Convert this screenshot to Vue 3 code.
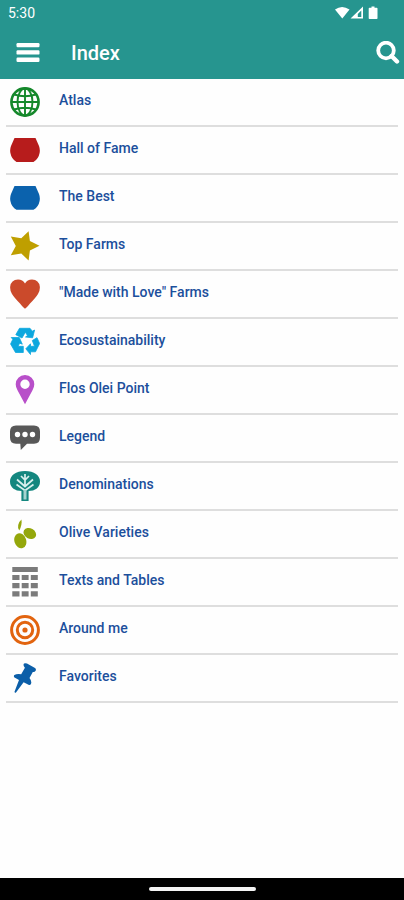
<script setup>
const items = [
  { id: 'atlas', label: 'Atlas' },
  { id: 'fame', label: 'Hall of Fame' },
  { id: 'best', label: 'The Best' },
  { id: 'farms', label: 'Top Farms' },
  { id: 'love', label: '"Made with Love" Farms' },
  { id: 'eco', label: 'Ecosustainability' },
  { id: 'point', label: 'Flos Olei Point' },
  { id: 'legend', label: 'Legend' },
  { id: 'denominations', label: 'Denominations' },
  { id: 'olive', label: 'Olive Varieties' },
  { id: 'tables', label: 'Texts and Tables' },
  { id: 'around', label: 'Around me' },
  { id: 'favorites', label: 'Favorites' },
]
</script>

<template>
  <div class="screen">
    <header class="header">
      <div class="status">
        <span>5:30</span>
        <svg class="status-icons" width="44" height="14" viewBox="0 0 44 14" fill="#fff" aria-hidden="true">
          <path d="M0 3.500Q7 -1.500 14.500 3.500L7.300 12.500Z" />
          <path fill-rule="evenodd" d="M28 .5V12.500H15.500ZM26.300 4.500L22.800 8V11H26.300Z" />
          <path d="M36.500 .5h3v1.200h2.200q.8 0 .8.800v9.700q0 .8-.8.800h-7.200q-.8 0-.8-.8V2.500q0-.8.8-.8h2z" />
        </svg>
      </div>
      <div class="bar">
        <button class="icon-button" type="button" aria-label="Menu">
          <svg width="24" height="20" viewBox="0 0 24 20" fill="#fff" aria-hidden="true">
            <rect x="0.500" y="0" width="23" height="4.300" rx="1.200" />
            <rect x="0.500" y="7.300" width="23" height="4.300" rx="1.200" />
            <rect x="0.500" y="14.600" width="23" height="4.300" rx="1.200" />
          </svg>
        </button>
        <h1 class="title">Index</h1>
        <button class="icon-button" type="button" aria-label="Search">
          <svg width="24" height="24" viewBox="0 0 24 24" fill="none" stroke="#fff" aria-hidden="true">
            <circle cx="10" cy="9.500" r="7.800" stroke-width="3.800" />
            <path d="M15.500 15L21 20.500" stroke-width="4.400" stroke-linecap="round" />
          </svg>
        </button>
      </div>
    </header>

    <nav class="list" aria-label="Index">
      <a v-for="item in items" :key="item.id" class="row" :href="'#' + item.id">
        <svg class="icon" viewBox="0 0 30 30" aria-hidden="true">
          <g v-if="item.id === 'atlas'" fill="none" stroke="#15882b" stroke-width="1.900">
            <circle cx="15" cy="15" r="13.600" stroke-width="2.600" />
            <ellipse cx="15" cy="15" rx="7.500" ry="13.500" />
            <path d="M15 1V29M1 15H29M4 7.500Q15 11 26 7.500M4 22.500Q15 19 26 22.500" />
          </g>
          <path v-else-if="item.id === 'fame'" fill="#b71c1c" d="M4.500 3H25.500L29 11Q30.300 14.500 29.600 18Q28.500 24 23.500 27H6.500Q1.500 24 .4 18Q-.3 14.500 1 11Z" />
          <path v-else-if="item.id === 'best'" fill="#0b62ad" d="M4.500 3H25.500L29 11Q30.300 14.500 29.600 18Q28.500 24 23.500 26.700H6.500Q1.500 24 .4 18Q-.3 14.500 1 11Z" />
          <path v-else-if="item.id === 'farms'" fill="#bf9f00" d="M18.600.3L19.900 10L29.500 14.800L19.900 19.600L18.600 29.500L11.300 22.500L.8 24.300L5.800 15L.8 5.500L11.300 7.300Z" />
          <path v-else-if="item.id === 'love'" fill="#cb4a2b" d="M15 29.700Q13.500 28.800 10 24.500Q4.500 19 2 15Q-.2 11.500.2 7.500Q1 .7 8 .4Q12.800.4 15 4.500Q17.200.4 22 .4Q29 .7 29.800 7.500Q30.200 11.500 28 15Q25.500 19 20 24.500Q16.500 28.800 15 29.700Z" />
          <g v-else-if="item.id === 'eco'" fill="#0ca7de" stroke="#0ca7de" stroke-width="0.800" stroke-linejoin="round">
            <path d="M5.800 7.700L9.500 1.300H20L22.300 4.200L24.600 3L22.600 10.800L15.500 10L17.500 8.500L15.300 5.200L12 11Z" />
            <path d="M22.300 13.500L27 10.700L29.600 16.500L25.500 24.800H20.500V27.500L15.800 21.800L20.500 16.800V19.300H24.500Z" />
            <path d="M1.200 10.500L9.300 10.500L12.300 17.200L9.700 16.200L8 19.300H13.300V25.500H5.500L.6 17L2.800 12.300Z" />
          </g>
          <path v-else-if="item.id === 'point'" fill="#b84fc9" fill-rule="evenodd" d="M15 0Q19 0 21.600 2.700Q24.300 5.300 24.300 9.300Q24.300 12 22.500 15.300L15 29.300L7.500 15.300Q5.700 12 5.700 9.300Q5.700 5.300 8.400 2.700Q11 0 15 0ZM15 4.500A4.700 4.700 0 1 0 15 13.900A4.700 4.700 0 1 0 15 4.500Z" />
          <g v-else-if="item.id === 'legend'">
            <path fill="#585858" d="M6 2.500H24Q30 2.500 30 8.500V14.500Q30 20.700 24 20.700H17L10.800 27L10.300 20.700H6Q0 20.700 0 14.500V8.500Q0 2.500 6 2.500Z" />
            <g fill="#fff">
              <circle cx="7.500" cy="11.500" r="2.700" />
              <circle cx="15" cy="11.500" r="2.700" />
              <circle cx="22.500" cy="11.500" r="2.700" />
            </g>
          </g>
          <g v-else-if="item.id === 'denominations'">
            <path fill="#14877f" d="M15 0Q22 0 26 3Q30 6 30 10.500Q30 15 26.500 17.700Q23.500 20 18.600 20V30H11.400V20Q6.500 20 3.500 17.700Q0 15 0 10.500Q0 6 4 3Q8 0 15 0Z" />
            <path fill="none" stroke="#d9f0ee" stroke-width="1.700" d="M15 3V15M11 5L15 9L19 5M7 8.500L15 15.500L23 8.500M6.500 13.500L15 19.500L23.500 13.500" />
            <path fill="#a5d3cf" d="M13.500 19H16.500V28.500H13.500Z" />
          </g>
          <g v-else-if="item.id === 'olive'" fill="#94a70b">
            <ellipse cx="10.300" cy="21.800" rx="5.900" ry="7.700" transform="rotate(-18 10.300 21.800)" />
            <ellipse cx="19.800" cy="14.500" rx="6.700" ry="5.200" transform="rotate(30 19.800 14.500)" />
            <path d="M11.500.5Q12.300 5.500 9.300 11.500Q7.500 9.500 8.200 6Q9 2.500 11.500.5Z" />
          </g>
          <path v-else-if="item.id === 'tables'" fill="#7b7b7b" d="M2.300 0H27.800V5H2.300ZM2.300 8H9.500V13H2.300ZM11.700 8H18.600V13H11.700ZM20.800 8H27.800V13H20.800ZM2.300 16H9.500V21.200H2.300ZM11.700 16H18.600V21.200H11.700ZM20.800 16H27.800V21.200H20.800ZM2.300 24.200H9.500V29.500H2.300ZM11.700 24.200H18.600V29.500H11.700ZM20.800 24.200H27.800V29.500H20.800Z" />
          <g v-else-if="item.id === 'around'" fill="none" stroke="#e2640f" stroke-width="3">
            <circle cx="15" cy="15" r="13.400" />
            <circle cx="15" cy="15" r="7.700" />
            <circle cx="15" cy="15" r="2.600" fill="#e2640f" stroke="none" />
          </g>
          <path v-else fill="#0b5ea8" d="M14 .6Q15.500-.3 17 .6L25 5Q26.500 6.200 25.600 7.800Q24.600 9.300 22.800 8.900L19.500 15Q22.300 18.500 20.800 21.300Q20 22.500 18.500 21.800L13.600 19.300L6 29.500Q4.700 30.200 4.500 28.700L9 17L4.500 14.500Q3.300 13.300 4.400 12Q7 10.300 11.200 11.200L14.900 4.700Q12.700 2.500 14 .6Z" />
        </svg>
        <span class="label">{{ item.label }}</span>
      </a>
    </nav>

    <footer class="system-bar"><span class="handle"></span></footer>
  </div>
</template>

<style>
body {
  margin: 0;
  background: #fff;
}
</style>

<style scoped>
.screen {
  display: flex;
  flex-direction: column;
  min-height: 100vh;
  background: #fefefe;
  font-family: Roboto, "Liberation Sans", sans-serif;
}
.header {
  background: #26958f;
  color: #fff;
}
.status {
  display: flex;
  align-items: center;
  justify-content: space-between;
  height: 26px;
  padding: 0 25px 0 8px;
  font-size: 14px;
}
.bar {
  display: flex;
  align-items: center;
  height: 53px;
  padding: 0 4px 0 16px;
}
.icon-button {
  display: flex;
  padding: 0;
  border: 0;
  background: none;
  cursor: pointer;
}
.title {
  flex: 1;
  margin: 0 0 0 31px;
  font-size: 20px;
  line-height: 24px;
  font-weight: 500;
}
.list {
  flex: 1;
  padding: 0 6px;
}
.row {
  display: flex;
  align-items: center;
  gap: 19px;
  height: 46px;
  padding-left: 4px;
  border-bottom: 2px solid #dedede;
  color: #1c4f9c;
  text-decoration: none;
}
.icon {
  flex: none;
  width: 30px;
  height: 30px;
}
.label {
  padding-bottom: 4px;
  font-size: 14px;
  line-height: 16px;
  font-weight: 500;
}
.system-bar {
  display: flex;
  align-items: center;
  justify-content: center;
  height: 22px;
  background: #000;
}
.handle {
  width: 107px;
  height: 4px;
  border-radius: 2px;
  background: #f4f4f4;
}
</style>
